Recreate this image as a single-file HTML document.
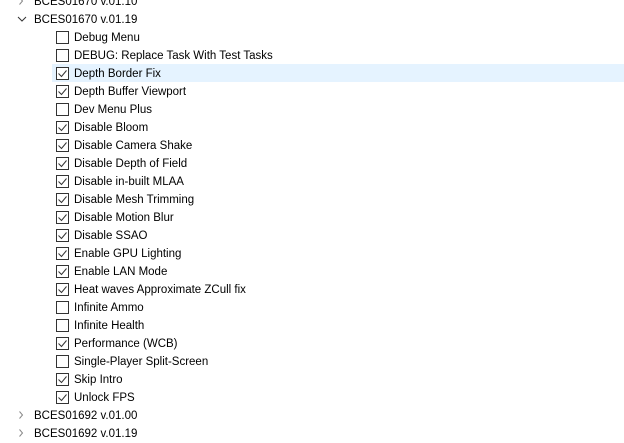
<!DOCTYPE html><html><head><style>
body{margin:0;width:624px;height:440px;overflow:hidden;background:#fff;font-family:"Liberation Sans",sans-serif;font-size:11.5px;color:#000;position:relative}
.r{position:absolute;left:0;width:624px;height:18px;line-height:18px;white-space:nowrap}
.p span{position:absolute;left:34px;top:1px}
.p svg{position:absolute;left:17px;top:5px}
.c .b{position:absolute;left:56px;top:3px;width:11px;height:11px;border:1px solid #333;background:#fff}
.c .b svg{display:block;position:absolute;left:0;top:0}
.c span{position:absolute;left:74px;top:1px}
.hl{position:absolute;left:52px;top:64px;width:572px;height:18px;background:#e5f3ff}
</style></head><body>
<div class="hl"></div>
<div class="r p" style="top:-8px"><svg width="8" height="8"><path d="M2.5 0.5L5.5 4L2.5 7.5" stroke="#888" fill="none"/></svg><span>BCES01670 v.01.10</span></div>
<div class="r p" style="top:10px"><svg width="10" height="8"><path d="M1 2L5 6L9 2" stroke="#333" fill="none"/></svg><span>BCES01670 v.01.19</span></div>
<div class="r p" style="top:406px"><svg width="8" height="8"><path d="M2.5 0.5L5.5 4L2.5 7.5" stroke="#888" fill="none"/></svg><span>BCES01692 v.01.00</span></div>
<div class="r p" style="top:424px"><svg width="8" height="8"><path d="M2.5 0.5L5.5 4L2.5 7.5" stroke="#888" fill="none"/></svg><span>BCES01692 v.01.19</span></div>
<div class="r c" style="top:28px"><div class="b"></div><span>Debug Menu</span></div>
<div class="r c" style="top:46px"><div class="b"></div><span>DEBUG: Replace Task With Test Tasks</span></div>
<div class="r c" style="top:64px"><div class="b"><svg width="11" height="11"><path d="M1.5 5.5L4.5 8.5L9.5 2.5" stroke="#333" fill="none"/></svg></div><span>Depth Border Fix</span></div>
<div class="r c" style="top:82px"><div class="b"><svg width="11" height="11"><path d="M1.5 5.5L4.5 8.5L9.5 2.5" stroke="#333" fill="none"/></svg></div><span>Depth Buffer Viewport</span></div>
<div class="r c" style="top:100px"><div class="b"></div><span>Dev Menu Plus</span></div>
<div class="r c" style="top:118px"><div class="b"><svg width="11" height="11"><path d="M1.5 5.5L4.5 8.5L9.5 2.5" stroke="#333" fill="none"/></svg></div><span>Disable Bloom</span></div>
<div class="r c" style="top:136px"><div class="b"><svg width="11" height="11"><path d="M1.5 5.5L4.5 8.5L9.5 2.5" stroke="#333" fill="none"/></svg></div><span>Disable Camera Shake</span></div>
<div class="r c" style="top:154px"><div class="b"><svg width="11" height="11"><path d="M1.5 5.5L4.5 8.5L9.5 2.5" stroke="#333" fill="none"/></svg></div><span>Disable Depth of Field</span></div>
<div class="r c" style="top:172px"><div class="b"><svg width="11" height="11"><path d="M1.5 5.5L4.5 8.5L9.5 2.5" stroke="#333" fill="none"/></svg></div><span>Disable in-built MLAA</span></div>
<div class="r c" style="top:190px"><div class="b"><svg width="11" height="11"><path d="M1.5 5.5L4.5 8.5L9.5 2.5" stroke="#333" fill="none"/></svg></div><span>Disable Mesh Trimming</span></div>
<div class="r c" style="top:208px"><div class="b"><svg width="11" height="11"><path d="M1.5 5.5L4.5 8.5L9.5 2.5" stroke="#333" fill="none"/></svg></div><span>Disable Motion Blur</span></div>
<div class="r c" style="top:226px"><div class="b"><svg width="11" height="11"><path d="M1.5 5.5L4.5 8.5L9.5 2.5" stroke="#333" fill="none"/></svg></div><span>Disable SSAO</span></div>
<div class="r c" style="top:244px"><div class="b"><svg width="11" height="11"><path d="M1.5 5.5L4.5 8.5L9.5 2.5" stroke="#333" fill="none"/></svg></div><span>Enable GPU Lighting</span></div>
<div class="r c" style="top:262px"><div class="b"><svg width="11" height="11"><path d="M1.5 5.5L4.5 8.5L9.5 2.5" stroke="#333" fill="none"/></svg></div><span>Enable LAN Mode</span></div>
<div class="r c" style="top:280px"><div class="b"><svg width="11" height="11"><path d="M1.5 5.5L4.5 8.5L9.5 2.5" stroke="#333" fill="none"/></svg></div><span>Heat waves Approximate ZCull fix</span></div>
<div class="r c" style="top:298px"><div class="b"></div><span>Infinite Ammo</span></div>
<div class="r c" style="top:316px"><div class="b"></div><span>Infinite Health</span></div>
<div class="r c" style="top:334px"><div class="b"><svg width="11" height="11"><path d="M1.5 5.5L4.5 8.5L9.5 2.5" stroke="#333" fill="none"/></svg></div><span>Performance (WCB)</span></div>
<div class="r c" style="top:352px"><div class="b"></div><span>Single-Player Split-Screen</span></div>
<div class="r c" style="top:370px"><div class="b"><svg width="11" height="11"><path d="M1.5 5.5L4.5 8.5L9.5 2.5" stroke="#333" fill="none"/></svg></div><span>Skip Intro</span></div>
<div class="r c" style="top:388px"><div class="b"><svg width="11" height="11"><path d="M1.5 5.5L4.5 8.5L9.5 2.5" stroke="#333" fill="none"/></svg></div><span>Unlock FPS</span></div>
</body></html>
